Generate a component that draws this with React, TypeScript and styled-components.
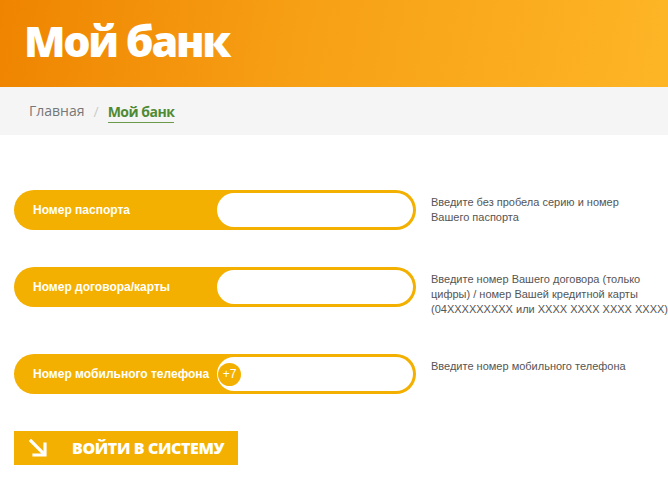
import React from "react";
import styled, { createGlobalStyle } from "styled-components";

const Global = createGlobalStyle`
  html, body { margin: 0; padding: 0; background: #fff; }
  body { font-family: "Liberation Sans", Arial, sans-serif; overflow: hidden; }
  * { box-sizing: border-box; }
`;

const Page = styled.div`
  width: 668px;
  min-height: 491px;
  background: #fff;
`;

const Header = styled.header`
  height: 87px;
  background: linear-gradient(100deg, #ef8400 0%, #f7a015 45%, #fdb526 100%);
  display: flex;
  align-items: center;
  padding-left: 24px;
`;

const Title = styled.h1`
  margin: 0;
  color: #fff;
  font-family: "Open Sans", sans-serif;
  font-weight: 800;
  font-size: 43px;
  letter-spacing: -2.3px;
  line-height: 1;
  padding-bottom: 6px;
`;

const Crumbs = styled.nav`
  height: 48px;
  background: #f5f5f5;
  display: flex;
  align-items: center;
  padding-left: 29px;
  gap: 9px;
  font-family: "Open Sans", sans-serif;
  font-size: 14px;
`;

const Crumb = styled.span<{ $active?: boolean }>`
  color: ${(p) => (p.$active ? "#4f8a35" : "#777")};
  font-weight: ${(p) => (p.$active ? 700 : 400)};
  letter-spacing: ${(p) => (p.$active ? "-0.5px" : "0")};
  border-bottom: ${(p) => (p.$active ? "1px solid #6a9a4a" : "none")};
  padding-bottom: 1px;
  margin-top: ${(p) => (p.$active ? "2px" : "0")};
`;

const Sep = styled.span`
  color: #ccc;
`;

const Main = styled.main`
  padding: 55px 0 0 14px;
  display: flex;
  flex-direction: column;
  gap: 37px;
`;

const Row = styled.div`
  display: flex;
  align-items: flex-start;
  gap: 15px;
`;

const Pill = styled.div`
  width: 402px;
  height: 40px;
  border-radius: 20px;
  background: #f4b000;
  display: flex;
  align-items: stretch;
  padding: 3px 3px 3px 0;
  flex-shrink: 0;
`;

const Label = styled.label`
  width: 203px;
  padding-left: 19px;
  display: flex;
  align-items: center;
  color: #fff;
  font-weight: 700;
  font-size: 12px;
  white-space: nowrap;
`;

const Field = styled.div`
  flex: 1;
  background: #fff;
  border-radius: 17px;
  display: flex;
  align-items: center;
`;

const Prefix = styled.span`
  width: 23px;
  height: 23px;
  margin-left: 1px;
  border-radius: 50%;
  background: #f4b000;
  color: #fff;
  font-size: 12px;
  display: flex;
  align-items: center;
  justify-content: center;
`;

const Help = styled.p`
  margin: 0;
  padding-top: 5px;
  width: 215px;
  color: #555;
  font-size: 11px;
  line-height: 15px;
`;

const Nowrap = styled.span`
  white-space: nowrap;
`;

const Submit = styled.button`
  width: 224px;
  height: 34px;
  border: none;
  background: #f4b000;
  display: flex;
  align-items: center;
  padding: 0 0 0 14px;
  gap: 24px;
  color: #fff;
  font-family: "Open Sans", sans-serif;
  font-weight: 800;
  font-size: 16px;
  letter-spacing: -0.4px;
  cursor: pointer;
`;

const Arrow = () => (
  <svg width="20" height="20" viewBox="0 0 20 20" fill="none">
    <path d="M3 3 L16 16" stroke="#fff" strokeWidth="3.2" strokeLinecap="square" />
    <path d="M17 6 V17 H6" stroke="#fff" strokeWidth="3.2" strokeLinecap="square" />
  </svg>
);

export default function App() {
  return (
    <Page>
      <Global />
      <Header>
        <Title>Мой банк</Title>
      </Header>
      <Crumbs>
        <Crumb>Главная</Crumb>
        <Sep>/</Sep>
        <Crumb $active>Мой банк</Crumb>
      </Crumbs>
      <Main>
        <Row>
          <Pill>
            <Label>Номер паспорта</Label>
            <Field />
          </Pill>
          <Help>Введите без пробела серию и номер Вашего паспорта</Help>
        </Row>
        <Row>
          <Pill>
            <Label>Номер договора/карты</Label>
            <Field />
          </Pill>
          <Help>
            Введите номер Вашего договора (только цифры) / номер Вашей кредитной карты{" "}
            <Nowrap>(04XXXXXXXXX или XXXX XXXX XXXX XXXX)</Nowrap>
          </Help>
        </Row>
        <Row>
          <Pill>
            <Label>Номер мобильного телефона</Label>
            <Field>
              <Prefix>+7</Prefix>
            </Field>
          </Pill>
          <Help>Введите номер мобильного телефона</Help>
        </Row>
        <div>
          <Submit>
            <Arrow />
            ВОЙТИ В СИСТЕМУ
          </Submit>
        </div>
      </Main>
    </Page>
  );
}
